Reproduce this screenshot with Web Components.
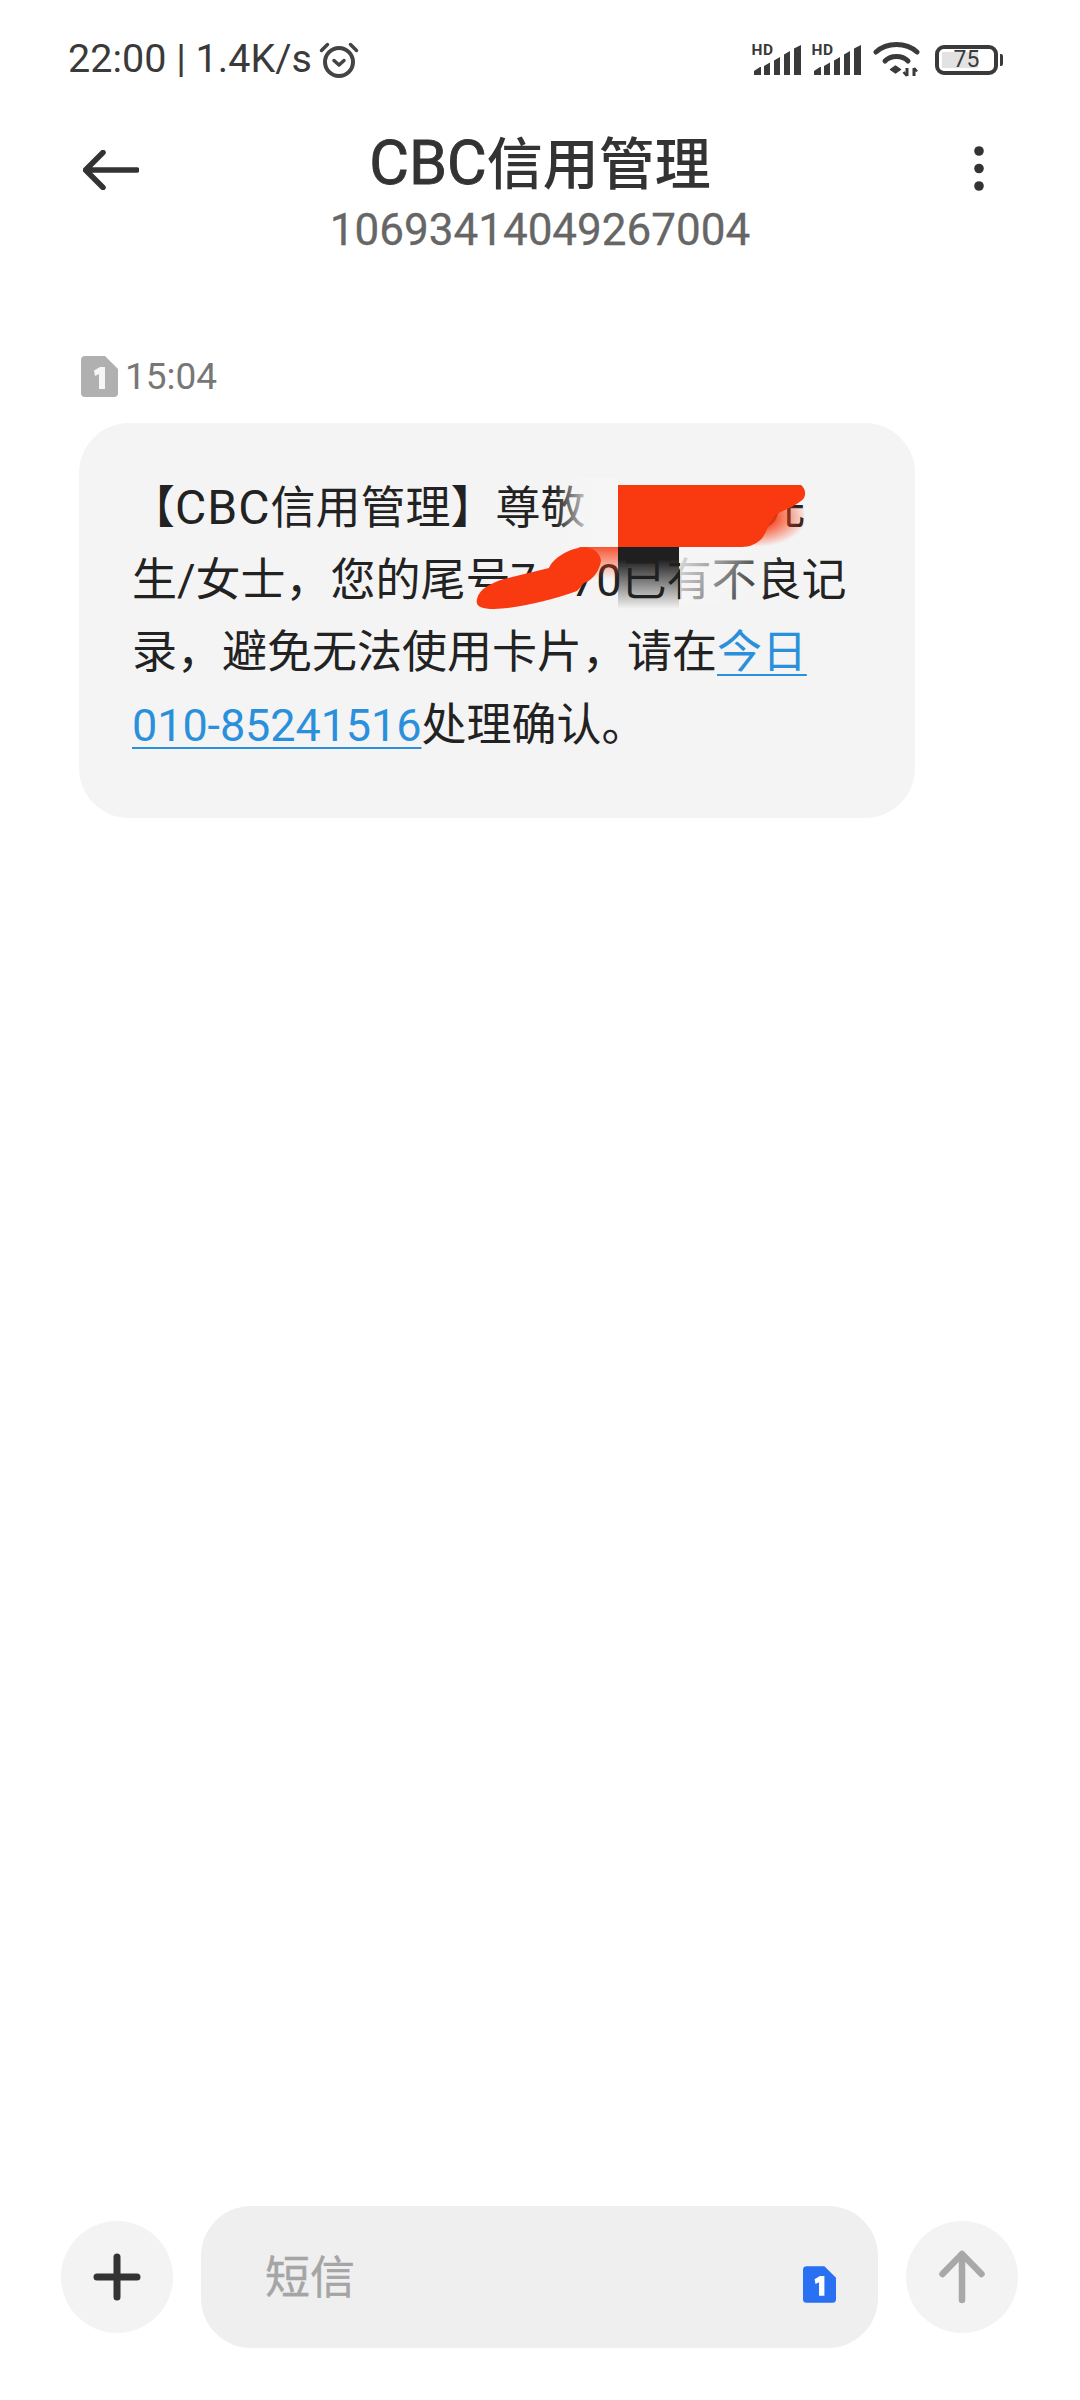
<!DOCTYPE html>
<html lang="zh"><head><meta charset="utf-8">
<style>
html,body{margin:0;padding:0;background:#fff}
body{width:1080px;height:2400px;font-family:Roboto,"Noto Sans CJK SC",sans-serif;overflow:hidden}
sms-app{height:2400px}
</style></head><body>
<sms-app>
  <status-bar slot="status"></status-bar>
  <thread-header slot="header" number="10693414049267004"></thread-header>
  <msg-time slot="thread">15:04</msg-time>
  <msg-bubble slot="thread"></msg-bubble>
  <compose-bar slot="compose"></compose-bar>
</sms-app>
<script>
function def(name,css,html){
  customElements.define(name,class extends HTMLElement{
    connectedCallback(){
      if(this.shadowRoot)return;
      const s=this.attachShadow({mode:'open'});
      s.innerHTML='<style>'+css+'</style>'+(typeof html==='function'?html(this):html);
    }
  });
}
const FONT='Roboto,"Noto Sans CJK SC",sans-serif';
const simIcon=(w,h,fill,fg)=>`<svg width="${w}" height="${h}" viewBox="0 0 37 41" style="display:block"><path d="M4 0H24L37 13V37a4 4 0 0 1-4 4H4a4 4 0 0 1-4-4V4a4 4 0 0 1 4-4Z" fill="${fill}"/><path d="M13 14.500 19 11h5V33h-6V18l-4 2Z" fill="${fg}"/></svg>`;
const signal=`<svg width="49" height="41" viewBox="0 -5 49 41" style="display:block"><text x="-.5" y="11" font-family="Roboto,sans-serif" font-weight="700" font-size="15.500" letter-spacing=".6" fill="#3a3a3a">HD</text><g fill="#3a3a3a"><path d="M2 31V27L8 23H9V31Z"/><path d="M12 31V22L18 18.500V31Z"/><path d="M22 31V16.500L28 13V31Z"/><path d="M32 31V10.500L38 7V31Z"/><path d="M42 31V4.500L49 1V31Z"/></g></svg>`;
def('status-bar',`:host{display:flex;align-items:center;height:76px;margin-top:-1px;padding:0 77px 0 68px;box-sizing:border-box;color:#3a3a3a;font:400 39.500px ${FONT}}
.l{display:flex;align-items:center;gap:7px;flex:1}
.r{display:flex;align-items:center;margin-top:1px}
.t{line-height:44px;white-space:nowrap}
.bat{width:63px;height:30px;box-sizing:border-box;border:4px solid #3a3a3a;border-radius:9px;display:flex;align-items:center;justify-content:center;font-size:23px;line-height:22px;background:linear-gradient(#e2e2e2,#e2e2e2) no-repeat 3px 3px/36px 16px}
.stub{width:3px;height:12px;background:#3a3a3a;border-radius:0 2px 2px 0;margin-left:2px}
`,`<div class="l"><span class="t">22:00 | 1.4K/s</span>
<svg width="40" height="37" viewBox="0 0 40 37" fill="none" stroke="#444" stroke-linecap="round" stroke-linejoin="round"><circle cx="20" cy="21" r="14" stroke-width="4"/><path d="M15 19.500 20 24 25 19.500" stroke-width="3.500"/><path d="M2.500 9.500 8.500 3.500M37.500 9.500 31.500 3.500" stroke-width="3.500"/></svg></div>
<div class="r">${signal}<span style="width:11px"></span>${signal}<span style="width:12px"></span>
<svg width="47" height="35" viewBox="0 0 47 35" fill="none" stroke="#3a3a3a" stroke-width="5" stroke-linecap="round" style="display:block"><path d="M3 10C14 0 33 0 44 10"/><path d="M12 19C18 13 29 13 35 19"/><path d="M17.500 27.500 22.500 24 27.500 27.500 22.500 31Z" fill="#3a3a3a" stroke-width="1.500" stroke-linejoin="round"/><path d="M34 26V34M41 26V34" stroke-width="3" stroke-linecap="butt"/><path d="M30.500 30 34 34M44 29.500 41 26" stroke-width="2.500" stroke-linecap="butt"/></svg>
<span style="width:15px"></span><div class="bat">75</div><span class="stub"></span></div>`);
def('thread-header',`:host{display:flex;align-items:flex-start;height:176px;padding:0 96px 0 83px;box-sizing:border-box}
.back{flex:none;margin-top:53px;display:block}
.c{flex:1;display:flex;flex-direction:column;align-items:center;margin:27px 0 0 -33px}
.n{font:500 56px/78px ${FONT};color:#333;white-space:nowrap}
.n b{font-weight:400;font-size:61px;-webkit-text-stroke:.9px #333}
.num{font:400 44px/50px ${FONT};color:#666;white-space:nowrap;margin-top:1px;-webkit-text-stroke:.3px #666}
.more{flex:none;margin-top:49px;display:block}
`,h=>`<svg class="back" width="56" height="40" viewBox="0 0 56 40" fill="none" stroke="#333" stroke-width="5.500" stroke-linecap="round" stroke-linejoin="round"><path d="M20 2.500 2.500 20 20 37.500M3 20H54"/></svg>
<div class="c"><div class="n"><b>CBC</b>信用管理</div><div class="num">${h.getAttribute('number')}</div></div>
<svg class="more" width="10" height="45" viewBox="0 0 10 45" fill="#333"><circle cx="5" cy="5" r="4.800"/><circle cx="5" cy="22.500" r="4.800"/><circle cx="5" cy="40" r="4.800"/></svg>`);
def('msg-time',`:host{display:flex;align-items:center;gap:7px;margin:83px 0 0 81px;height:41px;color:#777;font:400 37px/41px ${FONT}}`,`${simIcon(37,41,'#b0b0b0','#f6f6f6')}<span><slot></slot></span>`);
def('msg-bubble',`:host{display:block;position:relative;margin:26px 0 0 79px;width:836px;height:395px;box-sizing:border-box;background:#f4f4f4;border-radius:50px;padding:49px 0 0 53px;color:#222;font:400 45px/72.200px Roboto,"Noto Sans CJK SC",sans-serif;white-space:nowrap}
a{color:#2b90dc;text-decoration:underline;text-decoration-thickness:2px;text-underline-offset:6px;letter-spacing:-.1px}
.gap{display:inline-block}
.br{margin-left:-2px}
.cbc{font-size:48px;letter-spacing:1px}
.fade{position:absolute;pointer-events:none}
svg{position:absolute;left:0;top:0}
`,`<span class="br">【</span><span class="cbc">CBC</span>信用管理】尊敬<span class="gap" style="width:175px"></span>先<br>生/女士，您的尾号7<span class="gap" style="width:35px"></span>70已有不良记<br>录，避免无法使用卡片，请在<a>今日<br>010-85241516</a>处理确认。
<div class="fade" style="left:476px;top:55px;width:63px;height:69px;background:linear-gradient(90deg,rgba(246,246,246,0),rgba(246,246,246,.95) 60%)"></div>
<div class="fade" style="left:601px;top:124px;width:110px;height:58px;background:linear-gradient(115deg,rgba(246,246,246,.9),rgba(246,246,246,.55) 35%,rgba(246,246,246,0) 80%)"></div>
<div class="fade" style="left:539px;top:124px;width:61px;height:62px;background:linear-gradient(180deg,#1f1f1f 0,#1f1f1f 20%,rgba(31,31,31,0) 100%)"></div>
<svg width="836" height="395" viewBox="0 0 836 395"><defs><linearGradient id="rv" x1="0" x2="0" y1="0" y2="1"><stop offset="0" stop-color="#f93a10" stop-opacity=".85"/><stop offset="1" stop-color="#f93a10" stop-opacity="0"/></linearGradient><radialGradient id="rg" cx=".3" cy=".25" r=".75"><stop offset=".35" stop-color="#f93a10" stop-opacity=".9"/><stop offset="1" stop-color="#f93a10" stop-opacity="0"/></radialGradient></defs>
<rect x="655" y="84" width="70" height="40" fill="url(#rg)"/>
<path d="M539 62H722C727 66 728 74 722 78 712 86 700 88 694 94 688 102 688 112 680 118 674 123 668 124 660 124H539Z" fill="#f93a10"/>
<path d="M500 124H539V156H515Z" fill="url(#rv)"/>
<path d="M398 176C400 166 412 160 425 156L470 145C474 135 490 125 506 124 516 125 522 132 522 138 520 150 512 158 505 160L498 168C470 178 440 185 415 186 402 186 396 183 398 176Z" fill="#f93a10"/>
</svg>`);
def('compose-bar',`:host{display:flex;align-items:center;height:142px;padding:0 62px 52px 61px;box-sizing:content-box}
.btn{flex:none;width:112px;height:112px;border-radius:50%;background:#f3f3f3;display:flex;align-items:center;justify-content:center}
.in{flex:none;width:677px;height:142px;margin:0 28px;box-sizing:border-box;border-radius:50px;background:#efefef;display:flex;align-items:center;padding:0 42px 0 64px;color:#a5a5a5;font:400 45px/50px ${FONT}}
.in span{flex:1;margin-top:3px;-webkit-text-stroke:.4px #a5a5a5}
.sim{margin-top:15px}
`,`<div class="btn"><svg width="48" height="48" viewBox="0 0 48 48" fill="none" stroke="#333" stroke-width="7" stroke-linecap="round"><path d="M24 4V44M4 24H44"/></svg></div>
<div class="in"><span>短信</span><div class="sim">${simIcon(33,37,'#2a70f2','#fff')}</div></div>
<div class="btn"><svg width="46" height="54" viewBox="0 0 46 54" fill="none" stroke="#a8a8a8" stroke-width="6.500" stroke-linecap="round" stroke-linejoin="round"><path d="M3.500 24 23 4 42.500 24M23 5V50"/></svg></div>`);
def('sms-app',`:host{display:flex;flex-direction:column;width:1080px;height:2400px;box-sizing:border-box;padding-top:22px;background:#fff}
.grow{flex:1}
`,`<slot name="status"></slot><slot name="header"></slot><slot name="thread"></slot><div class="grow"></div><slot name="compose"></slot>`);
</script>
</body></html>
